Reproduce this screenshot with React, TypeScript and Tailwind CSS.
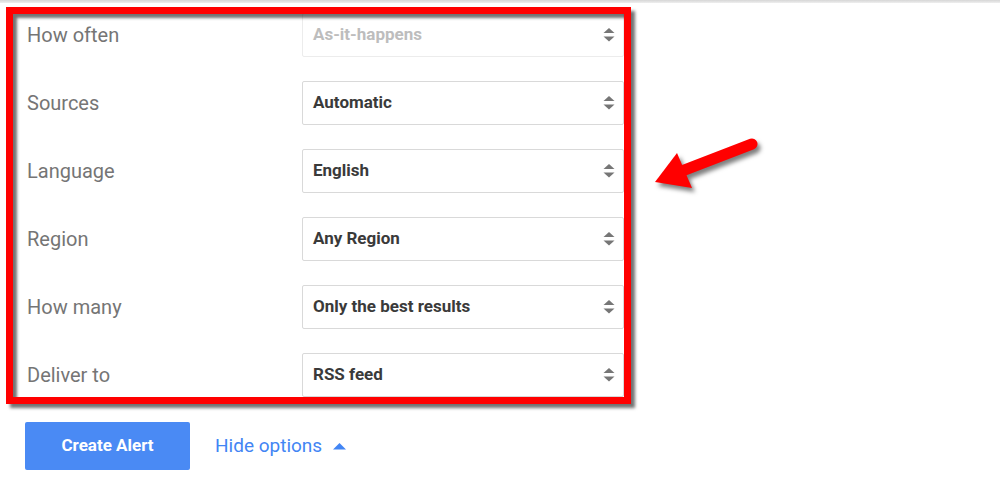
import React from "react";

const rows: { label: string; value: string; disabled?: boolean }[] = [
  { label: "How often", value: "As-it-happens", disabled: true },
  { label: "Sources", value: "Automatic" },
  { label: "Language", value: "English" },
  { label: "Region", value: "Any Region" },
  { label: "How many", value: "Only the best results" },
  { label: "Deliver to", value: "RSS feed" },
];

function UpDown() {
  return (
    <svg width="12" height="14" viewBox="0 0 12 14" className="shrink-0">
      <polygon points="0.5,5 6,0 11.5,5" fill="#767676" />
      <polygon points="0.5,8.5 11.5,8.5 6,13.5" fill="#767676" />
    </svg>
  );
}

export default function App() {
  return (
    <div
      className="relative w-[1000px] h-[490px] bg-white overflow-hidden"
      style={{ fontFamily: "Roboto, 'Liberation Sans', Arial, sans-serif" }}
    >
      <div className="h-[3px] bg-gradient-to-b from-[#d6d6d6] to-[#efefef]" />
      <div className="pt-[10px] pl-[27px] flex flex-col gap-[24px]">
        {rows.map((r) => (
          <div key={r.label} className="flex items-center h-[44px]">
            <div className="w-[275px] text-[20px] text-[#757575]">{r.label}</div>
            <div
              className={
                "w-[322px] h-[44px] flex items-center justify-between pl-[10px] pr-[8px] rounded-[2px] border bg-white " +
                (r.disabled ? "border-[#ececec]" : "border-[#d9d9d9]")
              }
            >
              <span
                className={
                  "text-[17px] font-bold " + (r.disabled ? "text-[#bdbdbd]" : "text-[#3a3a3a]")
                }
              >
                {r.value}
              </span>
              <UpDown />
            </div>
          </div>
        ))}
      </div>
      <div className="flex items-center pl-[25px] mt-[25px]">
        <button className="w-[165px] h-[48px] rounded-[2px] bg-[#4a8af4] text-white text-[17px] font-bold">
          Create Alert
        </button>
        <span className="ml-[25px] text-[19px] text-[#4285f4]">Hide options</span>
        <svg width="13" height="7" viewBox="0 0 13 7" className="ml-[11px]">
          <polygon points="0,6.5 6.5,0 13,6.5" fill="#4285f4" />
        </svg>
      </div>

      {/* red annotation frame */}
      <div className="absolute left-[6px] top-[7px] w-[625px] h-[397px] border-[7px] border-[#ff0000] shadow-[4px_4px_3px_rgba(0,0,0,0.55),inset_4px_4px_3px_rgba(0,0,0,0.55)]" />

      {/* red annotation arrow */}
      <svg
        className="absolute left-[640px] top-[125px]"
        width="130"
        height="80"
        viewBox="0 0 130 80"
        style={{ filter: "drop-shadow(3px 4px 2px rgba(0,0,0,0.5))" }}
      >
        <line x1="112" y1="19" x2="42" y2="46" stroke="#ff0000" strokeWidth="11" strokeLinecap="round" />
        <polygon points="15,57 37,28 52,63" fill="#ff0000" />
      </svg>
    </div>
  );
}
